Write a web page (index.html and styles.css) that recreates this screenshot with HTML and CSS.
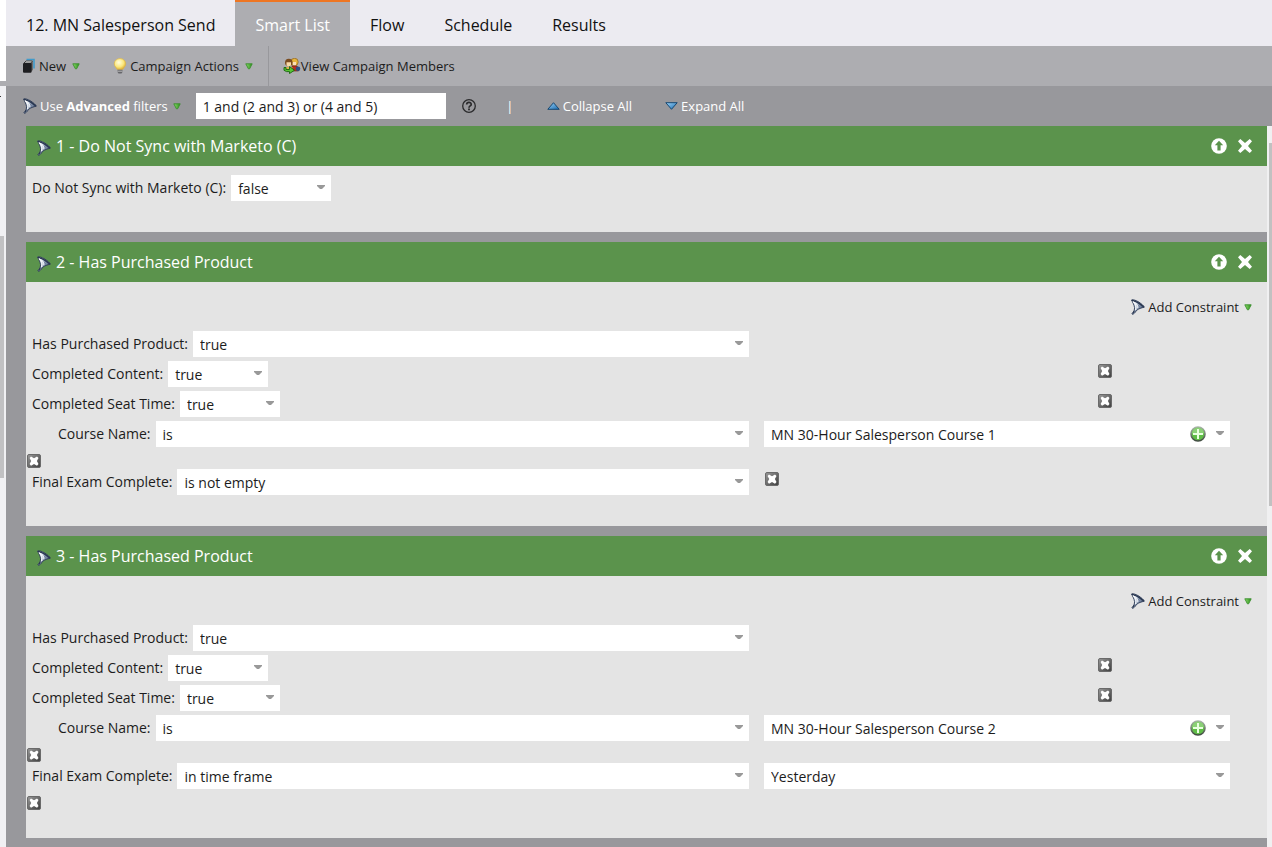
FILE: index.html
```html
<!DOCTYPE html>
<html lang="en">
<head>
  <meta charset="UTF-8" />
  <meta name="viewport" content="width=device-width, initial-scale=1.0"/>
  <title>12. MN Salesperson Send</title>
  <link rel="stylesheet" href="styles.css">
</head>
<body>
  <!-- shared icons -->
  <svg class="sprite" width="0" height="0" aria-hidden="true">
    <defs>
      <linearGradient id="steel" x1="0" y1="0" x2="1" y2="0.6">
        <stop offset="0" stop-color="#ffffff"/>
        <stop offset="0.45" stop-color="#c3cfe0"/>
        <stop offset="1" stop-color="#2f4366"/>
      </linearGradient>
      <linearGradient id="leaf" x1="0" y1="0" x2="1" y2="0">
        <stop offset="0" stop-color="#8fdc6c"/>
        <stop offset="1" stop-color="#2a8f1c"/>
      </linearGradient>
      <linearGradient id="sky" x1="0" y1="0" x2="1" y2="1">
        <stop offset="0" stop-color="#9fd6fa"/>
        <stop offset="1" stop-color="#1668ad"/>
      </linearGradient>
      <linearGradient id="dark" x1="0" y1="0" x2="1" y2="1">
        <stop offset="0" stop-color="#9a9a9a"/>
        <stop offset="1" stop-color="#3c3c3c"/>
      </linearGradient>
      <linearGradient id="ring" x1="0" y1="0" x2="0" y2="1">
        <stop offset="0" stop-color="#a9b3a9"/>
        <stop offset="1" stop-color="#3f4a3f"/>
      </linearGradient>
      <radialGradient id="glow" cx="0.4" cy="0.35" r="0.7">
        <stop offset="0" stop-color="#fffde0"/>
        <stop offset="0.6" stop-color="#fbe77a"/>
        <stop offset="1" stop-color="#d9a62c"/>
      </radialGradient>
    </defs>
    <symbol id="funnel" viewBox="0 0 16 16">
      <path d="M1.500 1C3 .4 6 1.200 9 3.200C11.500 4.900 13.800 6.800 14.300 8.200C11.500 8.800 8.500 9.800 6.800 11.200L4.600 14L2.600 15.500L2 14.500C4 12.500 4.700 10.500 4.500 8.500C4.200 6 2.800 3.500 1.500 1Z" fill="url(#steel)" stroke="#2a3852" stroke-width=".9"/>
      <path d="M1.800 1.200C5.500 2.200 10.500 5 13.800 8" fill="none" stroke="#2a3852" stroke-width="1.200"/>
      <path d="M3 2.800C5.800 4.800 6.600 7.500 5.600 11M3.400 3C7 4.600 8.200 6.500 7.800 9" fill="none" stroke="#fff" stroke-width="1"/>
      <path d="M7.500 5C9 6.200 9.400 7.400 9.200 8.600" fill="none" stroke="#4a5d80" stroke-width=".7"/>
      <path d="M4.800 11.500L2.600 14.800" stroke="#2a3852" stroke-width="1"/>
    </symbol>
    <symbol id="drop" viewBox="0 0 8 7">
      <path d="M.8 .8H7.200L4.600 5.800H3.400Z" fill="url(#leaf)" stroke="#3a8f2c" stroke-width=".9"/>
    </symbol>
    <symbol id="remove" viewBox="0 0 14 14">
      <rect x=".5" y=".5" width="13" height="13" rx="1.500" fill="url(#dark)" stroke="#6a6a6a"/>
      <path d="M2.600 4L4 2.400L7 4.200L10 2.400L11.500 4L9.900 7L11.500 10L10 11.700L7 9.900L4 11.700L2.600 10L4.200 7Z" fill="#fff"/>
    </symbol>
    <symbol id="plus" viewBox="0 0 16 16">
      <circle cx="8" cy="8" r="7" fill="#5fbd46" stroke="url(#ring)" stroke-width="1.600"/>
      <path d="M2 7.500A6 6 0 0 1 14 7.500Z" fill="#8bd076"/>
      <path d="M8 3V13M3 8H13" stroke="#e9ffe0" stroke-width="2"/>
    </symbol>
    <symbol id="up" viewBox="0 0 16 16">
      <circle cx="8" cy="8" r="7.800" fill="#fff"/>
      <path d="M8 2.800L12.200 7.200H9.600V12.400H6.400V7.200H3.800Z" fill="#5b934c"/>
    </symbol>
    <symbol id="close" viewBox="0 0 16 16">
      <path d="M3.300 1L8 5L12.700 1L15 3.300L11 8L15 12.700L12.700 15L8 11L3.300 15L1 12.700L5 8L1 3.300Z" fill="#fff"/>
    </symbol>
  </svg>

  <div class="app">
    <div class="tree-edge">
      <div class="tree-top"></div>
      <div class="tree-head"></div>
      <div class="tree-track"><div class="tree-thumb"></div></div>
    </div>

    <main class="main">
      <nav class="tabs">
        <a href="#campaign">12. MN Salesperson Send</a>
        <a href="#smart-list" class="active">Smart List</a>
        <a href="#flow">Flow</a>
        <a href="#schedule">Schedule</a>
        <a href="#results">Results</a>
      </nav>

      <div class="toolbar">
        <div class="tool-group">
          <button class="tool">
            <svg width="14" height="16" viewBox="0 0 14 16"><path d="M4.500 1.500H12V10.500" fill="none" stroke="#3f9acb" stroke-width="1.600"/><path d="M2 5L4 3H10.500L9 5Z" fill="#eee" stroke="#222" stroke-width=".8"/><path d="M9 5L10.700 3.200V12L9 14Z" fill="#555"/><rect x="1" y="5" width="8.500" height="9.800" rx="1" fill="#1d1d20"/></svg>
            <span>New</span>
            <svg class="drop" width="8" height="7"><use href="#drop"/></svg>
          </button>
          <button class="tool">
            <svg width="14" height="16" viewBox="0 0 14 16"><path d="M7 .6C3.500 .6 1.300 3 1.300 5.900C1.300 8.300 3.200 9.300 4.300 11.500H9.700C10.800 9.300 12.700 8.300 12.700 5.900C12.700 3 10.500 .6 7 .6Z" fill="url(#glow)" stroke="#dcb548" stroke-width=".7"/><path d="M4.500 11.800H9.500V14L8.500 15.600H5.500L4.500 14Z" fill="#66666a"/><path d="M4.500 13.200H9.500" stroke="#ccc" stroke-width=".8"/></svg>
            <span>Campaign Actions</span>
            <svg class="drop" width="8" height="7"><use href="#drop"/></svg>
          </button>
        </div>
        <button class="tool members">
          <svg width="18" height="16" viewBox="0 0 18 16"><circle cx="11.500" cy="4" r="3.700" fill="#e7b73d" stroke="#8a5a1c" stroke-width=".7"/><path d="M9.500 4H13V7.300H10Z" fill="#fbe0b8"/><path d="M9 8H14L15.500 10.500V13H10Z" fill="#b92f22" stroke="#6d1c15" stroke-width=".6"/><circle cx="15" cy="10.800" r="2.300" fill="#2d4f82"/><circle cx="5.800" cy="4.600" r="3.800" fill="#7a4c20"/><path d="M3.500 4.300H8V7.600L6 8.800L3.500 7.500Z" fill="#f8d9a6"/><path d="M1.500 9H9.500V12H1.500Z" fill="#d9b04d"/><path d="M1 9.500H3V11.500H6.500V8.600L11.500 12.200L6.500 15.600V13.600H3.500L1 12.300Z" fill="#58c433" stroke="#17650e" stroke-width=".9"/></svg>
          <span>View Campaign Members</span>
        </button>
      </div>

      <div class="filterbar">
        <button class="tool">
          <svg width="16" height="16"><use href="#funnel"/></svg>
          <span>Use <b>Advanced</b> filters</span>
          <svg class="drop" width="8" height="7"><use href="#drop"/></svg>
        </button>
        <input type="text" class="logic" aria-label="Filter logic" value="1 and (2 and 3) or (4 and 5)">
        <button class="tool help" aria-label="Help">
          <svg width="14" height="14" viewBox="0 0 14 14"><circle cx="7" cy="7" r="6.300" fill="none" stroke="#2a2a2c" stroke-width="1.300"/><path d="M4.700 5.500C4.700 2.700 9.300 2.800 9.200 5.400C9.200 7 7 6.800 7 8.700" fill="none" stroke="#2a2a2c" stroke-width="1.700"/><rect x="6.100" y="9.500" width="1.800" height="1.800" fill="#2a2a2c"/></svg>
        </button>
        <span class="divider">|</span>
        <button class="tool collapse">
          <svg width="13" height="8" viewBox="0 0 13 8"><path d="M6.500 .7L12.200 7.300H.8Z" fill="url(#sky)" stroke="#174872"/></svg>
          <span>Collapse All</span>
        </button>
        <button class="tool expand">
          <svg width="13" height="8" viewBox="0 0 13 8"><path d="M.8 .7H12.200L6.500 7.300Z" fill="url(#sky)" stroke="#174872"/></svg>
          <span>Expand All</span>
        </button>
      </div>

      <div class="list">
        <div class="cards">
          <section class="card">
            <header>
              <svg class="card-icon" width="16" height="16"><use href="#funnel"/></svg>
              <h2>1 - Do Not Sync with Marketo (C)</h2>
              <button aria-label="Move up"><svg width="16" height="16"><use href="#up"/></svg></button>
              <button aria-label="Delete"><svg width="16" height="16"><use href="#close"/></svg></button>
            </header>
            <div class="card-body">
              <div class="row">
                <div class="field">
                  <label for="f1-sync">Do Not Sync with Marketo (C):</label>
                  <select id="f1-sync" class="short"><option>false</option><option>true</option></select>
                </div>
              </div>
            </div>
          </section>

          <section class="card">
            <header>
              <svg class="card-icon" width="16" height="16"><use href="#funnel"/></svg>
              <h2>2 - Has Purchased Product</h2>
              <button aria-label="Move up"><svg width="16" height="16"><use href="#up"/></svg></button>
              <button aria-label="Delete"><svg width="16" height="16"><use href="#close"/></svg></button>
            </header>
            <div class="card-body">
              <div class="constraint">
                <button class="tool">
                  <svg width="16" height="16"><use href="#funnel"/></svg>
                  <span>Add Constraint</span>
                  <svg class="drop" width="8" height="7"><use href="#drop"/></svg>
                </button>
              </div>
              <div class="row">
                <div class="field">
                  <label for="f2-product">Has Purchased Product:</label>
                  <select id="f2-product"><option>true</option><option>false</option></select>
                </div>
              </div>
              <div class="row row-end">
                <div class="field">
                  <label for="f2-content">Completed Content:</label>
                  <select id="f2-content" class="short"><option>true</option><option>false</option></select>
                </div>
                <button class="remove" aria-label="Remove"><svg width="14" height="14"><use href="#remove"/></svg></button>
              </div>
              <div class="row row-end">
                <div class="field">
                  <label for="f2-seat">Completed Seat Time:</label>
                  <select id="f2-seat" class="short"><option>true</option><option>false</option></select>
                </div>
                <button class="remove" aria-label="Remove"><svg width="14" height="14"><use href="#remove"/></svg></button>
              </div>
              <div class="row">
                <div class="field indent">
                  <label for="f2-course">Course Name:</label>
                  <select id="f2-course"><option>is</option><option>is not</option></select>
                </div>
                <div class="field value">
                  <select aria-label="Course"><option>MN 30-Hour Salesperson Course 1</option></select>
                  <button class="add" aria-label="Add value"><svg width="16" height="16"><use href="#plus"/></svg></button>
                </div>
              </div>
              <div class="remove-row">
                <button class="remove" aria-label="Remove"><svg width="14" height="14"><use href="#remove"/></svg></button>
              </div>
              <div class="row">
                <div class="field">
                  <label for="f2-exam">Final Exam Complete:</label>
                  <select id="f2-exam"><option>is not empty</option><option>in time frame</option></select>
                </div>
                <button class="remove" aria-label="Remove"><svg width="14" height="14"><use href="#remove"/></svg></button>
              </div>
            </div>
          </section>

          <section class="card">
            <header>
              <svg class="card-icon" width="16" height="16"><use href="#funnel"/></svg>
              <h2>3 - Has Purchased Product</h2>
              <button aria-label="Move up"><svg width="16" height="16"><use href="#up"/></svg></button>
              <button aria-label="Delete"><svg width="16" height="16"><use href="#close"/></svg></button>
            </header>
            <div class="card-body">
              <div class="constraint">
                <button class="tool">
                  <svg width="16" height="16"><use href="#funnel"/></svg>
                  <span>Add Constraint</span>
                  <svg class="drop" width="8" height="7"><use href="#drop"/></svg>
                </button>
              </div>
              <div class="row">
                <div class="field">
                  <label for="f3-product">Has Purchased Product:</label>
                  <select id="f3-product"><option>true</option><option>false</option></select>
                </div>
              </div>
              <div class="row row-end">
                <div class="field">
                  <label for="f3-content">Completed Content:</label>
                  <select id="f3-content" class="short"><option>true</option><option>false</option></select>
                </div>
                <button class="remove" aria-label="Remove"><svg width="14" height="14"><use href="#remove"/></svg></button>
              </div>
              <div class="row row-end">
                <div class="field">
                  <label for="f3-seat">Completed Seat Time:</label>
                  <select id="f3-seat" class="short"><option>true</option><option>false</option></select>
                </div>
                <button class="remove" aria-label="Remove"><svg width="14" height="14"><use href="#remove"/></svg></button>
              </div>
              <div class="row">
                <div class="field indent">
                  <label for="f3-course">Course Name:</label>
                  <select id="f3-course"><option>is</option><option>is not</option></select>
                </div>
                <div class="field value">
                  <select aria-label="Course"><option>MN 30-Hour Salesperson Course 2</option></select>
                  <button class="add" aria-label="Add value"><svg width="16" height="16"><use href="#plus"/></svg></button>
                </div>
              </div>
              <div class="remove-row">
                <button class="remove" aria-label="Remove"><svg width="14" height="14"><use href="#remove"/></svg></button>
              </div>
              <div class="row">
                <div class="field">
                  <label for="f3-exam">Final Exam Complete:</label>
                  <select id="f3-exam"><option>in time frame</option><option>is not empty</option></select>
                </div>
                <div class="field value">
                  <select aria-label="Time frame"><option>Yesterday</option><option>Today</option></select>
                </div>
              </div>
              <div class="remove-row">
                <button class="remove" aria-label="Remove"><svg width="14" height="14"><use href="#remove"/></svg></button>
              </div>
            </div>
          </section>
        </div>
        <div class="scroll"><div class="scroll-thumb"></div></div>
      </div>
    </main>
  </div>
</body>
</html>
```
FILE: styles.css
```css
* {
  box-sizing: border-box;
}
body {
  margin: 0;
  font-family: "Open Sans", sans-serif;
  font-size: 14px;
  color: #1c1c1c;
  background: #98989c;
}
.sprite {
  position: absolute;
}
svg {
  display: block;
  flex: none;
}
button {
  padding: 0;
  border: none;
  background: none;
  font: inherit;
  color: inherit;
  cursor: pointer;
}
.app {
  display: flex;
  height: 100vh;
  overflow: hidden;
}

/* edge of the tree panel */
.tree-edge {
  width: 6px;
  display: flex;
  flex-direction: column;
  background: #f0f0f3;
}
.tree-top {
  height: 86px;
  background: #fff;
  border-bottom: 5px solid #adadb1;
}
.tree-head {
  width: 1px;
  height: 11px;
  border-bottom: 1px solid #333;
}
.tree-track {
  flex: 1;
  padding-top: 139px;
}
.tree-thumb {
  width: 4px;
  height: 242px;
  background: #c1c1c3;
}

.main {
  flex: 1;
  min-width: 0;
  display: flex;
  flex-direction: column;
}
.tabs {
  display: flex;
  height: 46px;
  flex: none;
  background: #ecebf1;
}
.tabs a {
  padding: 0 20px;
  border-top: 2px solid transparent;
  font-size: 16px;
  line-height: 46px;
  color: #111;
  text-decoration: none;
}
.tabs a.active {
  background: #adadb1;
  border-top-color: #ee7623;
  color: #fff;
}

.toolbar {
  display: flex;
  height: 40px;
  flex: none;
  background: #adadb1;
}
.tool-group {
  display: flex;
  gap: 33px;
  padding: 0 15px 0 16px;
  border-right: 1px solid #98989c;
}
.tool {
  display: flex;
  align-items: center;
  gap: 3px;
  font-size: 13px;
  white-space: nowrap;
}
.tool .drop {
  margin-left: 3px;
}
.members {
  padding-left: 14px;
  gap: 0;
}

.filterbar {
  display: flex;
  align-items: center;
  height: 40px;
  flex: none;
  padding-left: 16px;
  color: #fff;
  background: #98989c;
}
.filterbar .tool,
.constraint .tool {
  gap: 2px;
}
.logic {
  width: 250px;
  height: 26px;
  margin-left: 15px;
  padding: 0 7px;
  border: none;
  font: inherit;
  color: #1c1c1c;
}
.help {
  margin-left: 16px;
}
.divider {
  margin-left: 30px;
  width: 8px;
  font-size: 13px;
  text-align: center;
}
.filterbar .collapse,
.filterbar .expand {
  margin-left: 33px;
  gap: 3px;
}

.list {
  flex: 1;
  min-height: 0;
  display: flex;
  padding-left: 20px;
  overflow: hidden;
}
.cards {
  flex: 1;
  min-width: 0;
}
.scroll {
  width: 5px;
  padding: 17px 0 0 2px;
  background: #f0f0f1;
}
.scroll-thumb {
  height: 363px;
  background: #c1c1c1;
}

.card {
  margin-bottom: 10px;
  background: #e4e4e4;
}
.card header {
  display: flex;
  align-items: center;
  height: 40px;
  padding: 0 14px 0 10px;
  background: #5b934c;
  color: #fff;
}
.card-icon {
  margin-top: 3px;
}
.card h2 {
  flex: 1;
  margin: 0 0 0 4px;
  font-size: 16px;
  font-weight: normal;
}
.card header button {
  margin-left: 10px;
}
.card-body {
  padding: 9px 0 27px;
}
.constraint {
  display: flex;
  justify-content: flex-end;
  height: 32px;
  margin-bottom: 8px;
  padding-right: 15px;
}
.row {
  display: grid;
  grid-template-columns: 45fr 29fr;
  column-gap: 15px;
  height: 30px;
  padding-right: 37px;
}
/* remove button sits near the right edge */
.row-end {
  grid-template-columns: 1fr 133px;
  column-gap: 0;
}
.field {
  display: flex;
  height: 26px;
  padding-left: 6px;
}
.field.indent {
  padding-left: 32px;
}
.field.value {
  position: relative;
  padding-left: 0;
}
.field label {
  margin-right: 5px;
  line-height: 26px;
  white-space: nowrap;
}
select {
  appearance: none;
  flex: 1;
  min-width: 0;
  padding: 0 20px 0 7px;
  border: none;
  border-radius: 0;
  font: inherit;
  color: #1c1c1c;
  background: #fff url("data:image/svg+xml,%3Csvg xmlns='http://www.w3.org/2000/svg' width='8' height='4'%3E%3Cpath d='M0 0H8V1L5 4H3L0 1Z' fill='%23999'/%3E%3C/svg%3E") no-repeat right 6px top 10px;
}
select.short {
  flex: none;
  width: 100px;
}
.add {
  position: absolute;
  top: 5px;
  right: 24px;
}
.remove {
  align-self: start;
  justify-self: start;
  margin: 3px 0 0 1px;
}
.remove-row {
  display: flex;
  height: 18px;
}
```
